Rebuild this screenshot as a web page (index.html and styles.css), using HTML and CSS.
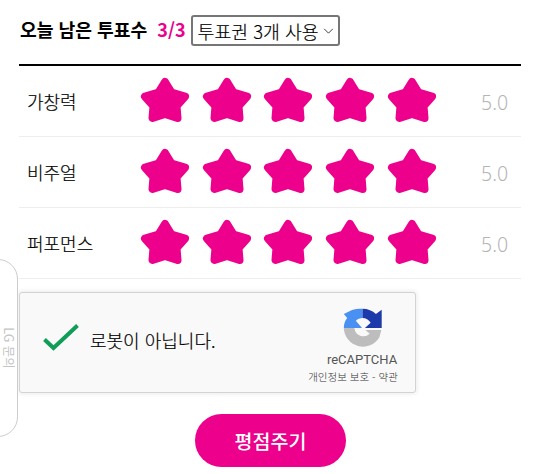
FILE: index.html
```html
<!DOCTYPE html>
<html lang="ko">
<head>
<meta charset="utf-8">
<title>평점주기</title>
<link rel="stylesheet" href="styles.css">
</head>
<body>
<aside class="side-tab"><span class="side-text">LG 문의</span></aside>
<main class="page">
  <header class="head">
    <strong class="head-title">오늘 남은 투표수</strong>
    <strong class="head-count">3/3</strong>
    <div class="ticket-wrap">
      <select class="ticket"><option>투표권 3개 사용</option></select>
      <svg class="ticket-arrow" viewBox="0 0 12 7"><path d="M1 1 L6 6 L11 1"/></svg>
    </div>
  </header>
  <section class="rates">
    <div class="row">
      <span class="label">가창력</span>
      <div class="stars">
        <svg class="star" viewBox="0 0 50 46"><polygon points="25,5 31.500,15.500 45,19.500 36.500,29 37.500,41 25,37 12.500,41 13.500,29 5,19.500 18.500,15.500"/></svg>
        <svg class="star" viewBox="0 0 50 46"><polygon points="25,5 31.500,15.500 45,19.500 36.500,29 37.500,41 25,37 12.500,41 13.500,29 5,19.500 18.500,15.500"/></svg>
        <svg class="star" viewBox="0 0 50 46"><polygon points="25,5 31.500,15.500 45,19.500 36.500,29 37.500,41 25,37 12.500,41 13.500,29 5,19.500 18.500,15.500"/></svg>
        <svg class="star" viewBox="0 0 50 46"><polygon points="25,5 31.500,15.500 45,19.500 36.500,29 37.500,41 25,37 12.500,41 13.500,29 5,19.500 18.500,15.500"/></svg>
        <svg class="star" viewBox="0 0 50 46"><polygon points="25,5 31.500,15.500 45,19.500 36.500,29 37.500,41 25,37 12.500,41 13.500,29 5,19.500 18.500,15.500"/></svg>
      </div>
      <span class="score">5.0</span>
    </div>
    <div class="row">
      <span class="label">비주얼</span>
      <div class="stars">
        <svg class="star" viewBox="0 0 50 46"><polygon points="25,5 31.500,15.500 45,19.500 36.500,29 37.500,41 25,37 12.500,41 13.500,29 5,19.500 18.500,15.500"/></svg>
        <svg class="star" viewBox="0 0 50 46"><polygon points="25,5 31.500,15.500 45,19.500 36.500,29 37.500,41 25,37 12.500,41 13.500,29 5,19.500 18.500,15.500"/></svg>
        <svg class="star" viewBox="0 0 50 46"><polygon points="25,5 31.500,15.500 45,19.500 36.500,29 37.500,41 25,37 12.500,41 13.500,29 5,19.500 18.500,15.500"/></svg>
        <svg class="star" viewBox="0 0 50 46"><polygon points="25,5 31.500,15.500 45,19.500 36.500,29 37.500,41 25,37 12.500,41 13.500,29 5,19.500 18.500,15.500"/></svg>
        <svg class="star" viewBox="0 0 50 46"><polygon points="25,5 31.500,15.500 45,19.500 36.500,29 37.500,41 25,37 12.500,41 13.500,29 5,19.500 18.500,15.500"/></svg>
      </div>
      <span class="score">5.0</span>
    </div>
    <div class="row">
      <span class="label">퍼포먼스</span>
      <div class="stars">
        <svg class="star" viewBox="0 0 50 46"><polygon points="25,5 31.500,15.500 45,19.500 36.500,29 37.500,41 25,37 12.500,41 13.500,29 5,19.500 18.500,15.500"/></svg>
        <svg class="star" viewBox="0 0 50 46"><polygon points="25,5 31.500,15.500 45,19.500 36.500,29 37.500,41 25,37 12.500,41 13.500,29 5,19.500 18.500,15.500"/></svg>
        <svg class="star" viewBox="0 0 50 46"><polygon points="25,5 31.500,15.500 45,19.500 36.500,29 37.500,41 25,37 12.500,41 13.500,29 5,19.500 18.500,15.500"/></svg>
        <svg class="star" viewBox="0 0 50 46"><polygon points="25,5 31.500,15.500 45,19.500 36.500,29 37.500,41 25,37 12.500,41 13.500,29 5,19.500 18.500,15.500"/></svg>
        <svg class="star" viewBox="0 0 50 46"><polygon points="25,5 31.500,15.500 45,19.500 36.500,29 37.500,41 25,37 12.500,41 13.500,29 5,19.500 18.500,15.500"/></svg>
      </div>
      <span class="score">5.0</span>
    </div>
  </section>
  <section class="captcha">
    <svg class="check" viewBox="0 0 38 30"><path d="M2.500 16.500 L11.500 25 L35.500 2.500"/></svg>
    <span class="captcha-text">로봇이 아닙니다.</span>
    <div class="brand">
      <svg class="logo" viewBox="0 0 48 48">
        <path fill="#bdbdbd" d="M4 24H15A9.500 9.500 0 0 0 31 30L26.500 26H43V26.500L41 34A20 20 0 0 1 4 24Z"/>
        <path fill="#4a90f2" d="M4 24C4 20 5 16.500 7.500 13.500L4 9.500L12 5.500C15 4.500 19 4 23.500 4V13.500C21 13.500 18.500 14.500 16.500 16.500L23 24Z"/>
        <path fill="#1c3aa9" d="M23.500 4C29 4 34 6 37.500 9.500L43.500 5V24H26L32 18.500C30 15.500 27 13.500 23.500 13.500Z"/>
      </svg>
      <span class="brand-name">reCAPTCHA</span>
      <span class="brand-links">개인정보 보호 - 약관</span>
    </div>
  </section>
  <div class="submit-wrap"><button class="submit" type="button">평점주기</button></div>
</main>
</body>
</html>
```
FILE: styles.css
```css
* { box-sizing: border-box; }
html, body { margin: 0; padding: 0; background: #fff; }
body { width: 540px; height: 474px; overflow: hidden; position: relative; font-family: "Noto Sans CJK KR", "Noto Sans", sans-serif; color: #000; }
.page { padding: 15px 19px 0; width: 540px; }
.head { display: flex; align-items: center; height: 31px; }
.head-title { font-size: 18.200px; font-weight: 700; line-height: 28px; margin-top: -3px; margin-left: 1px; }
.head-count { font-size: 18px; font-weight: 700; color: #ec008c; margin-left: 10px; margin-top: -3px; line-height: 28px; }
.ticket-wrap { position: relative; margin-left: 5px; width: 149px; height: 31px; }
.ticket { appearance: none; display: block; width: 149px; height: 31px; font-size: 18.300px; font-weight: 300; -webkit-text-stroke: 0.2px #000; font-family: "Noto Sans CJK KR", sans-serif; padding: 0 0 0 5px; background: #fff; color: #000; border: 2px solid #767676; border-radius: 3px; }
.ticket-arrow { position: absolute; right: 6px; top: 13px; width: 11px; height: 6px; }
.ticket-arrow path { fill: none; stroke: #222; stroke-width: 1; }
.rates { margin-top: 18px; width: 502px; border-top: 2px solid #000; }
.row { display: flex; align-items: center; height: 71px; border-bottom: 1px solid #eee; }
.label { width: 121px; padding-left: 8px; font-size: 18px; font-weight: 300; -webkit-text-stroke: 0.2px #000; line-height: 24px; }
.stars { display: flex; gap: 11.700px; width: 297px; margin-top: -3px; }
.star { width: 50px; height: 46px; flex: none; }
.star polygon { fill: #ec008c; stroke: #ec008c; stroke-width: 8; stroke-linejoin: round; }
.score { padding-top: 2px; padding-left: 44px; font-family: "Noto Sans", sans-serif; font-size: 19.500px; font-weight: 300; color: #b4b4b4; white-space: nowrap; }
.captcha { position: relative; margin-top: 13px; width: 397px; height: 101px; background: #f9f9f9; border: 1px solid #d3d3d3; border-radius: 3px; box-shadow: 0 0 4px 1px rgba(0,0,0,.08); display: flex; align-items: center; }
.check { width: 38px; height: 30px; margin-left: 22px; margin-top: -9px; flex: none; }
.check path { fill: none; stroke: #0f9d58; stroke-width: 4; }
.captcha-text { margin-left: 10px; font-size: 18px; font-weight: 300; -webkit-text-stroke: 0.2px #000; line-height: 24px; white-space: nowrap; margin-top: -5px; }
.brand { position: absolute; right: 16px; top: 12px; display: flex; flex-direction: column; align-items: center; width: 92px; }
.logo { width: 46px; height: 46px; margin-left: 19px; }
.brand-name { font-family: Roboto, sans-serif; font-size: 13px; color: #555; line-height: 16px; margin-top: 1px; margin-left: 18px; }
.brand-links { font-size: 10.500px; font-weight: 300; color: #333; line-height: 14px; margin-top: 2px; white-space: nowrap; }
.submit-wrap { display: flex; justify-content: center; margin-top: 21px; margin-left: 1px; }
.submit { width: 151px; height: 53px; border: 0; border-radius: 27px; background: #ec008c; color: #fff; font-family: "Noto Sans CJK KR", sans-serif; font-size: 19.500px; font-weight: 500; padding: 0; }
.side-tab { position: absolute; left: -40px; top: 259px; width: 58px; height: 178px; border: 1px solid #ccc; border-radius: 20px; background: #fff; z-index: 2; }
.side-text { position: absolute; left: 18px; top: 88px; width: 60px; text-align: center; transform: translate(0,-50%) rotate(90deg); font-family: "Noto Sans CJK KR", sans-serif; font-size: 12.500px; line-height: 14px; color: #c4c4c4; white-space: nowrap; }
```
